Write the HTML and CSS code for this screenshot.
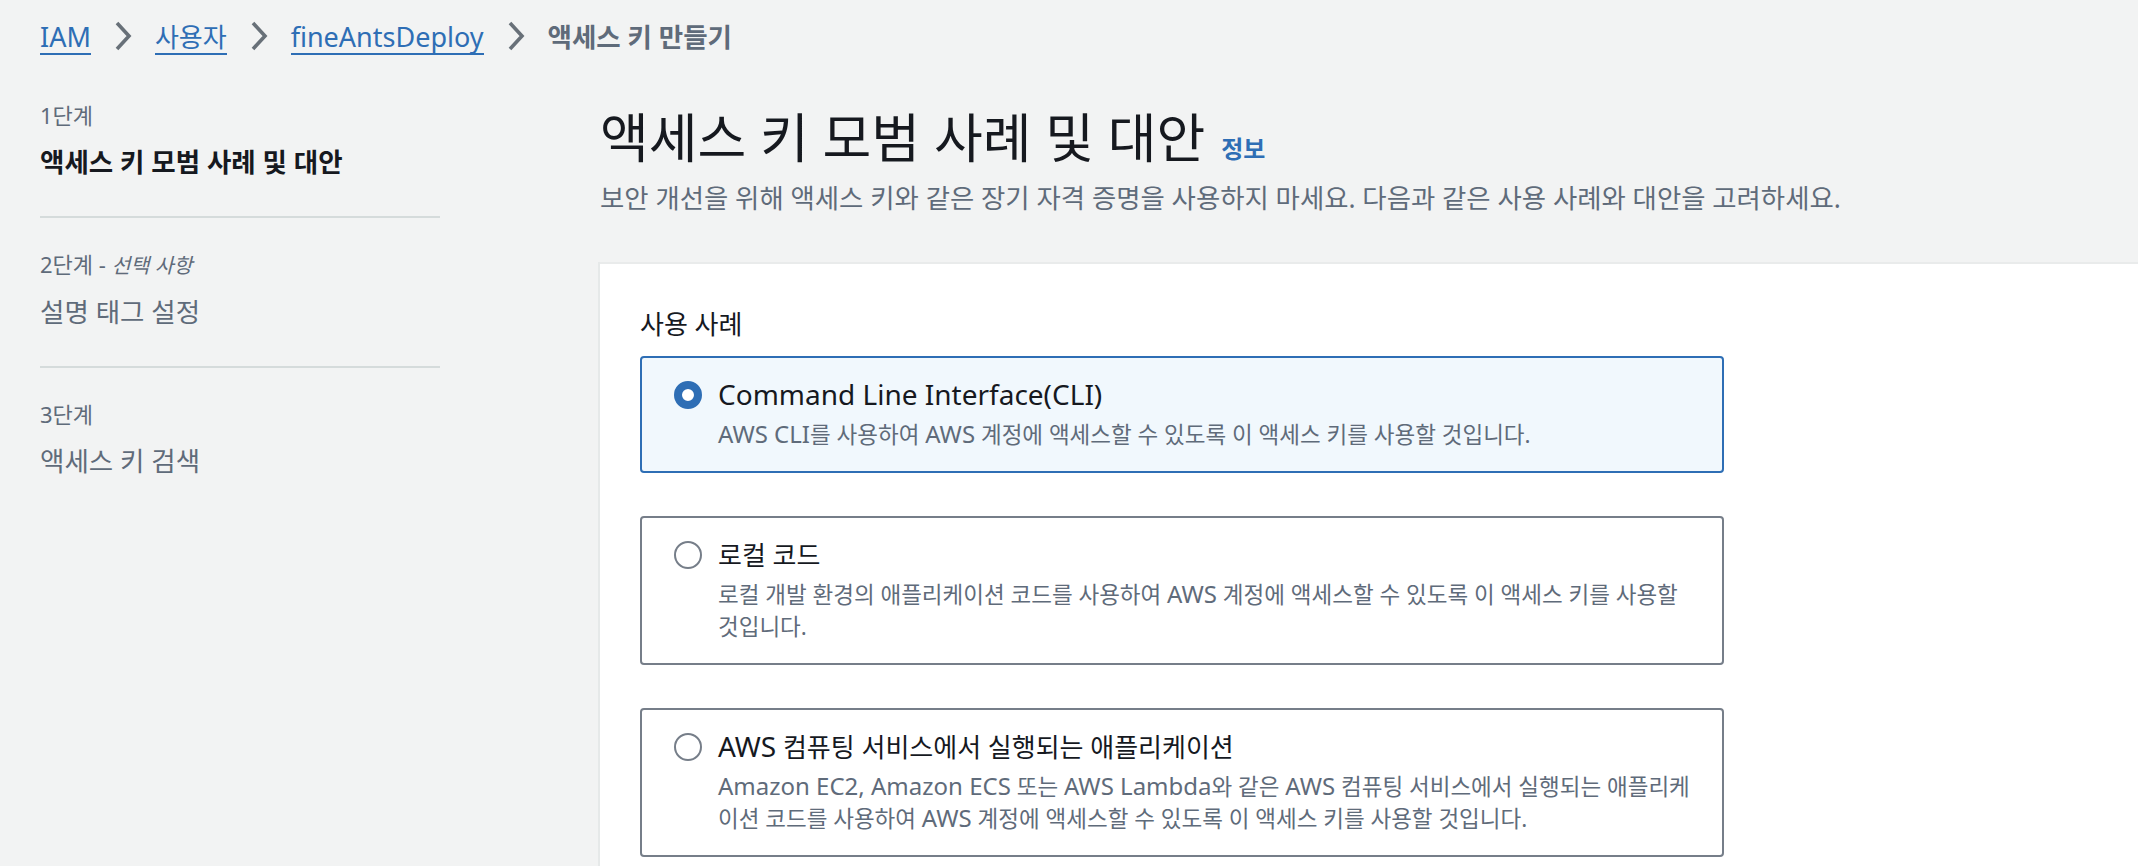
FILE: index.html
```html
<!DOCTYPE html>
<html lang="ko">
<head>
<meta charset="utf-8">
<title>액세스 키 만들기</title>
<link rel="stylesheet" href="styles.css">
</head>
<body>
<nav class="breadcrumbs">
  <a class="crumb crumb-en" href="#">IAM</a>
  <svg class="chev" viewBox="0 0 18 30" aria-hidden="true"><path d="M3 2 L15 15 L3 28"/></svg>
  <a class="crumb" href="#">사용자</a>
  <svg class="chev" viewBox="0 0 18 30" aria-hidden="true"><path d="M3 2 L15 15 L3 28"/></svg>
  <a class="crumb crumb-en" href="#">fineAntsDeploy</a>
  <svg class="chev" viewBox="0 0 18 30" aria-hidden="true"><path d="M3 2 L15 15 L3 28"/></svg>
  <span class="crumb current">액세스 키 만들기</span>
</nav>

<div class="layout">
  <ol class="steps">
    <li class="step">
      <div class="step-label">1단계</div>
      <div class="step-title active">액세스 키 모범 사례 및 대안</div>
    </li>
    <li class="step">
      <div class="step-label">2단계 - <em>선택 사항</em></div>
      <div class="step-title">설명 태그 설정</div>
    </li>
    <li class="step">
      <div class="step-label">3단계</div>
      <div class="step-title">액세스 키 검색</div>
    </li>
  </ol>

  <main class="main">
    <h1 class="title">액세스 키 모범 사례 및 대안<a class="info" href="#">정보</a></h1>
    <p class="desc">보안 개선을 위해 액세스 키와 같은 장기 자격 증명을 사용하지 마세요. 다음과 같은 사용 사례와 대안을 고려하세요.</p>

    <section class="container">
      <div class="field-label">사용 사례</div>
      <div class="tiles">
        <div class="tile selected">
          <span class="radio"></span>
          <div class="tile-body">
            <div class="tile-title"><span class="en">Command Line Interface(CLI)</span></div>
            <div class="tile-desc"><span class="en">AWS CLI</span>를 사용하여 <span class="en">AWS</span> 계정에 액세스할 수 있도록 이 액세스 키를 사용할 것입니다.</div>
          </div>
        </div>
        <div class="tile">
          <span class="radio"></span>
          <div class="tile-body">
            <div class="tile-title">로컬 코드</div>
            <div class="tile-desc">로컬 개발 환경의 애플리케이션 코드를 사용하여 <span class="en">AWS</span> 계정에 액세스할 수 있도록 이 액세스 키를 사용할 것입니다.</div>
          </div>
        </div>
        <div class="tile">
          <span class="radio"></span>
          <div class="tile-body">
            <div class="tile-title"><span class="en">AWS</span> 컴퓨팅 서비스에서 실행되는 애플리케이션</div>
            <div class="tile-desc"><span class="en">Amazon EC2, Amazon ECS</span> 또는 <span class="en">AWS Lambda</span>와 같은 <span class="en">AWS</span> 컴퓨팅 서비스에서 실행되는 애플리케이션 코드를 사용하여 <span class="en">AWS</span> 계정에 액세스할 수 있도록 이 액세스 키를 사용할 것입니다.</div>
          </div>
        </div>
      </div>
    </section>
  </main>
</div>
</body>
</html>
```

FILE: styles.css
```css
* {
  box-sizing: border-box;
}

html,
body {
  margin: 0;
  height: 100%;
}

body {
  display: flex;
  flex-direction: column;
  background: #f2f3f3;
  color: #16191f;
  font-family: "Noto Sans", "Noto Sans CJK KR", sans-serif;
  overflow: hidden;
}

/* Breadcrumbs */
.breadcrumbs {
  display: flex;
  align-items: center;
  gap: 23px;
  height: 55px;
  padding: 21px 0 0 40px;
  flex: none;
}

.crumb {
  font-size: 26px;
  line-height: 32px;
  color: #2e6eb5;
  text-decoration: none;
  border-bottom: 2px solid currentColor;
}

.crumb-en {
  font-size: 27px;
}

.crumb.current {
  color: #5f6b7a;
  font-weight: 700;
  font-size: 26.5px;
  border-bottom-color: transparent;
}

.chev {
  width: 18px;
  height: 30px;
  flex: none;
  margin-bottom: 5px;
  fill: none;
  stroke: #687078;
  stroke-width: 3.6;
  stroke-linejoin: miter;
}

/* Layout */
.layout {
  flex: 1;
  display: grid;
  grid-template-columns: 400px 1fr;
  column-gap: 160px;
  padding-left: 40px;
  margin-top: 44px;
  min-height: 0;
}

/* Steps nav */
.steps {
  list-style: none;
  margin: 0;
  padding: 0;
}

.step {
  padding: 30px 0 34px;
  border-bottom: 2px solid #d5dbdb;
}

.step:first-child {
  padding-top: 0;
}

.step:last-child {
  border-bottom: none;
}

.step-label {
  font-size: 22px;
  line-height: 32px;
  color: #5f6b7a;
  margin-bottom: 11px;
}

.step-label em {
  font-style: italic;
  font-size: 20.5px;
}

.step-title {
  font-size: 26.5px;
  line-height: 40px;
  color: #5f6b7a;
}

.step-title.active {
  color: #16191f;
  font-weight: 700;
}

/* Main */
.main {
  display: flex;
  flex-direction: column;
  padding-top: 9px;
  min-width: 0;
}

.title {
  margin: 0;
  font-size: 53px;
  line-height: 60px;
  font-weight: 400;
  color: #16191f;
}

.info {
  margin-left: 16px;
  font-size: 24px;
  line-height: 1;
  font-weight: 700;
  color: #2e6eb5;
  text-decoration: none;
}

.desc {
  margin: 10px 0 0;
  font-size: 26.4px;
  line-height: 40px;
  color: #5f6b7a;
}

.container {
  flex: 1;
  margin-top: 44px;
  background: #ffffff;
  border-top: 2px solid #e9ebeb;
  box-shadow: -2px 0 0 #e6e9e9;
  padding: 40px 0 0 40px;
}

.field-label {
  font-size: 26px;
  line-height: 40px;
  margin-bottom: 12px;
  color: #16191f;
}

.tiles {
  display: flex;
  flex-direction: column;
  gap: 43px;
  max-width: 1084px;
}

.tile {
  display: flex;
  align-items: flex-start;
  gap: 16px;
  padding: 17px 20px 20px 32px;
  border: 2px solid #767e89;
  border-radius: 4px;
  background: #ffffff;
}

.tile.selected {
  border-color: #2e6eb5;
  background: #f1f8fd;
}

.radio {
  flex: none;
  width: 28px;
  height: 28px;
  margin-top: 6px;
  border-radius: 50%;
  border: 2px solid #767e89;
  background: #ffffff;
}

.tile.selected .radio {
  border: 8px solid #2e6eb5;
}

.tile-body {
  display: flex;
  flex-direction: column;
  min-width: 0;
}

.tile-title {
  font-size: 26px;
  line-height: 40px;
  color: #16191f;
}

.tile-desc {
  margin-top: 4px;
  font-size: 22.5px;
  line-height: 32px;
  color: #5f6b7a;
}

.en {
  line-height: 1;
}

.tile-title .en {
  font-size: 28px;
}

.tile-desc .en {
  font-size: 24px;
}
```
